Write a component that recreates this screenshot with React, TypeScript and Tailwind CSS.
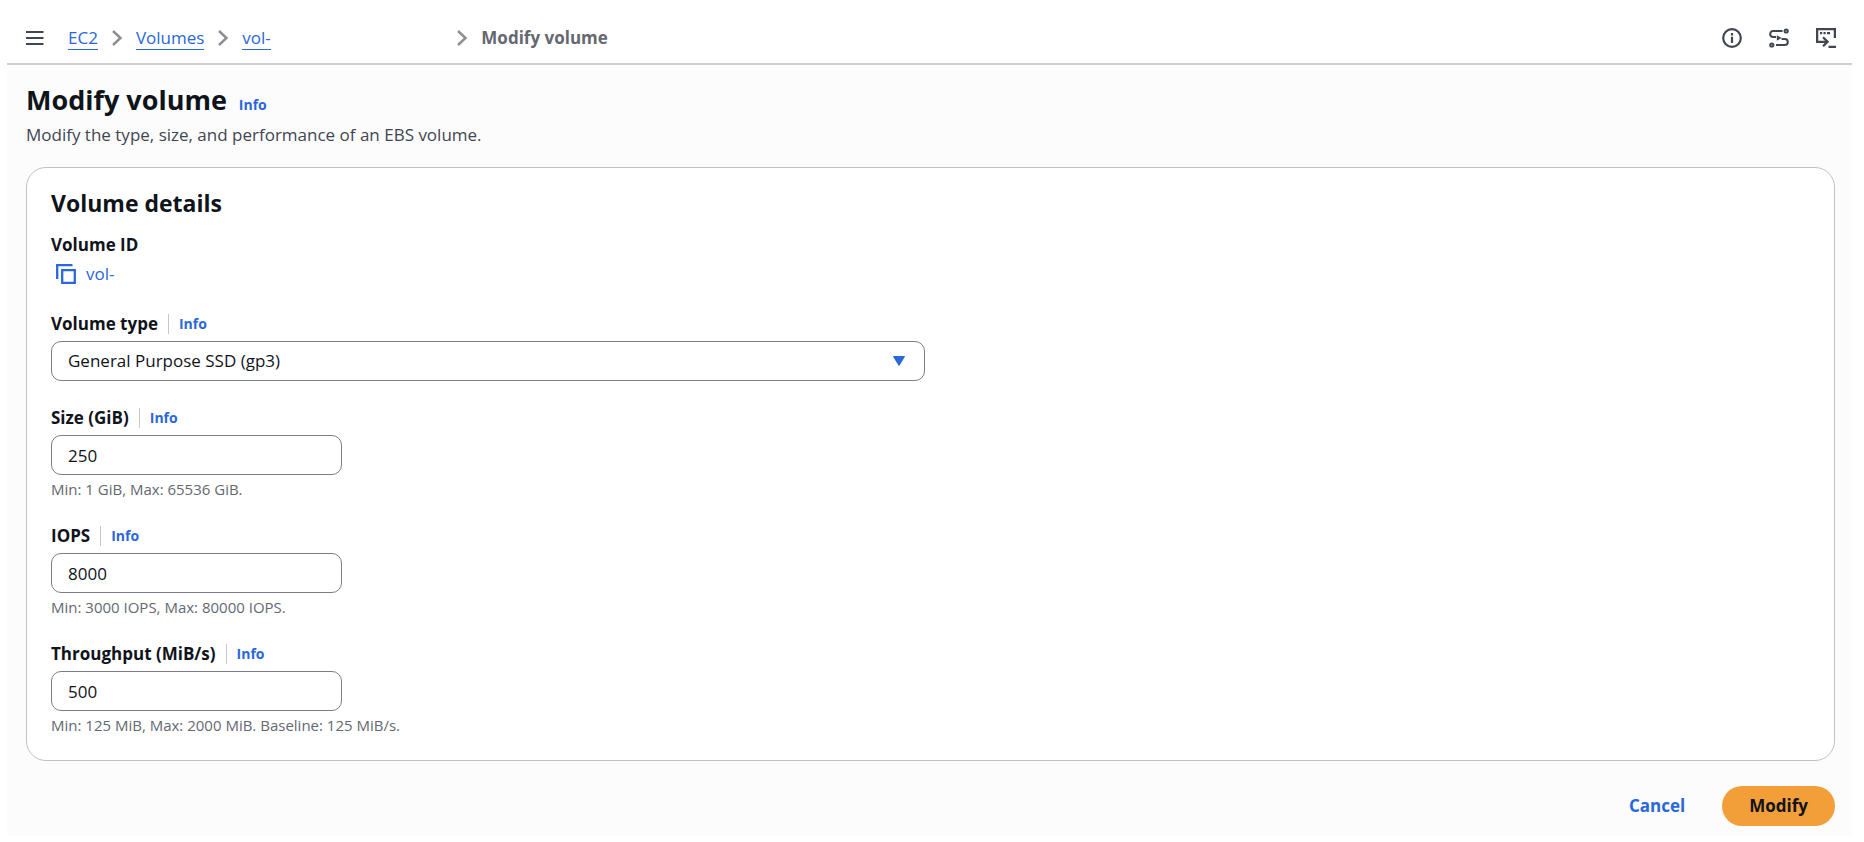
import { useState } from "react";
import type { ReactNode } from "react";

interface FieldProps {
  id: string;
  label: string;
  hint?: string;
  children: ReactNode;
}

const VOLUME_TYPES = [
  { value: "gp3", label: "General Purpose SSD (gp3)" },
  { value: "gp2", label: "General Purpose SSD (gp2)" },
  { value: "io1", label: "Provisioned IOPS SSD (io1)" },
  { value: "io2", label: "Provisioned IOPS SSD (io2)" },
];

const inputClass =
  "h-10 w-full rounded-[10px] border border-[#7d7d87] bg-white px-4 text-[17px] text-[#0f141a]";

export default function App() {
  const [volumeType, setVolumeType] = useState("gp3");
  const [size, setSize] = useState("250");
  const [iops, setIops] = useState("8000");
  const [throughput, setThroughput] = useState("500");

  return (
    <div className="min-h-screen bg-white pb-1 pl-[7px] pr-3 font-['Open_Sans','Noto_Sans',sans-serif] text-[17px] text-[#0f141a]">
      <TopBar />
      <main className="bg-[#fcfcfd] pb-2.5 pl-[19px] pr-[17px] pt-[15px]">
        <div className="flex items-baseline gap-3">
          <h1 className="text-[27px] font-bold leading-10">Modify volume</h1>
          <InfoLink />
        </div>
        <p className="mt-[3px] leading-6 text-[#424650]">
          Modify the type, size, and performance of an EBS volume.
        </p>

        <section className="mt-5 rounded-[20px] border border-[#c0c0c8] bg-white px-6 pb-[25px] pt-[19px]">
          <h2 className="text-[23px] font-bold leading-8">Volume details</h2>
          <dl className="mt-3.5">
            <dt className="font-bold leading-6">Volume ID</dt>
            <dd className="mt-[5px] flex items-center gap-2.5 pl-[5px] leading-6">
              <button type="button" aria-label="Copy volume ID" className="text-[#2a67d9]">
                <CopyIcon />
              </button>
              <a href="#volume" className="text-[#2a67d9]">
                vol-
              </a>
            </dd>
          </dl>

          <form className="mt-[26px] grid grid-cols-2 gap-3" onSubmit={(e) => e.preventDefault()}>
            <div className="flex flex-col gap-[25px]">
              <Field id="volume-type" label="Volume type">
                <div className="relative">
                  <select
                    id="volume-type"
                    value={volumeType}
                    onChange={(e) => setVolumeType(e.target.value)}
                    className={`${inputClass} appearance-none`}
                  >
                    {VOLUME_TYPES.map((t) => (
                      <option key={t.value} value={t.value}>
                        {t.label}
                      </option>
                    ))}
                  </select>
                  <CaretIcon />
                </div>
              </Field>
              <Field id="size" label="Size (GiB)" hint="Min: 1 GiB, Max: 65536 GiB.">
                <div className="w-1/3">
                  <input
                    id="size"
                    value={size}
                    onChange={(e) => setSize(e.target.value)}
                    className={inputClass}
                  />
                </div>
              </Field>
              <Field id="iops" label="IOPS" hint="Min: 3000 IOPS, Max: 80000 IOPS.">
                <div className="w-1/3">
                  <input
                    id="iops"
                    value={iops}
                    onChange={(e) => setIops(e.target.value)}
                    className={inputClass}
                  />
                </div>
              </Field>
              <Field
                id="throughput"
                label="Throughput (MiB/s)"
                hint="Min: 125 MiB, Max: 2000 MiB. Baseline: 125 MiB/s."
              >
                <div className="w-1/3">
                  <input
                    id="throughput"
                    value={throughput}
                    onChange={(e) => setThroughput(e.target.value)}
                    className={inputClass}
                  />
                </div>
              </Field>
            </div>
          </form>
        </section>

        <div className="mt-[25px] flex justify-end gap-2.5">
          <button type="button" className="h-10 px-[27px] font-bold text-[#2a67d9]">
            Cancel
          </button>
          <button type="button" className="h-10 rounded-full bg-[#f29f3a] px-[27px] font-bold">
            Modify
          </button>
        </div>
      </main>
    </div>
  );
}

function TopBar() {
  return (
    <header className="flex h-[65px] items-center justify-between border-b-2 border-[#d0d0d7] pl-[19px] pr-4 pt-3">
      <div className="flex items-center gap-6">
        <button type="button" aria-label="Open navigation" className="text-[#424650]">
          <svg width="18" height="16" viewBox="0 0 18 16" stroke="currentColor" strokeWidth="2">
            <path d="M0 2h17.500M0 8h17.500M0 14h17.500" />
          </svg>
        </button>
        <nav aria-label="Breadcrumbs">
          <ol className="flex items-center gap-[13px]">
            <Crumb href="#ec2">EC2</Crumb>
            <ChevronIcon />
            <Crumb href="#volumes">Volumes</Crumb>
            <ChevronIcon />
            <li className="w-[201px]">
              <CrumbLink href="#volume">vol-</CrumbLink>
            </li>
            <ChevronIcon />
            <li className="font-bold text-[#656871]" aria-current="page">
              Modify volume
            </li>
          </ol>
        </nav>
      </div>
      <div className="flex items-center gap-[27px] text-[#424650]">
        <button type="button" aria-label="Info">
          <svg width="20" height="20" viewBox="0 0 20 20" fill="none" stroke="currentColor" strokeWidth="2.2">
            <circle cx="10" cy="10" r="8.8" />
            <path d="M10 5v2.4M10 8.800V15" />
          </svg>
        </button>
        <button type="button" aria-label="Tutorials">
          <svg width="20" height="20" viewBox="0 0 20 20" fill="none" stroke="currentColor" strokeWidth="2">
            <path d="M13.500 3H4.200C2.300 3 1.200 4.300 1.200 6s1.200 3 3 3H7M12.500 11h3.300c1.900 0 3 1.300 3 3s-1.100 3-3 3H7" />
            <circle cx="17.200" cy="3" r="1.600" />
            <circle cx="2.800" cy="17" r="1.600" />
            <path d="M7.800 7.200l4.800 2.800-4.800 2.800z" fill="currentColor" stroke="none" />
          </svg>
        </button>
        <button type="button" aria-label="CloudShell">
          <svg width="20" height="20" viewBox="0 0 20 20" fill="none" stroke="currentColor" strokeWidth="2.3">
            <path d="M18.900 10V1.200H1.100v12.600H11M7 9.300l4.600 4.500L7 18.300M12.500 18.800H20" />
            <path d="M4 5.200h2.200M7.500 5.200h2.200M11 5.200h3" />
          </svg>
        </button>
      </div>
    </header>
  );
}

function Crumb({ href, children }: { href: string; children: ReactNode }) {
  return (
    <li>
      <CrumbLink href={href}>{children}</CrumbLink>
    </li>
  );
}

function CrumbLink({ href, children }: { href: string; children: ReactNode }) {
  return (
    <a href={href} className="border-b border-[#2a67d9] text-[#2a67d9]">
      {children}
    </a>
  );
}

function Field({ id, label, hint, children }: FieldProps) {
  return (
    <div>
      <div className="mb-[5px] flex h-6 items-center">
        <label htmlFor={id} className="font-bold">
          {label}
        </label>
        <span className="mx-2.5 h-5 w-px bg-[#c6c6cd]" />
        <InfoLink />
      </div>
      {children}
      {hint && <p className="mt-1 text-[15px] leading-5 text-[#656871]">{hint}</p>}
    </div>
  );
}

function InfoLink() {
  return (
    <a href="#info" className="text-sm font-bold text-[#2a67d9]">
      Info
    </a>
  );
}

function ChevronIcon() {
  return (
    <li aria-hidden="true">
      <svg width="12" height="16" viewBox="0 0 12 16" fill="none" stroke="#8c8c94" strokeWidth="2.4">
        <path d="M2 1l7.500 7L2 15" />
      </svg>
    </li>
  );
}

function CopyIcon() {
  return (
    <svg width="20" height="20" viewBox="0 0 20 20" fill="none" stroke="currentColor" strokeWidth="2.3">
      <path d="M1.200 15V1.200h15.300" />
      <path d="M6.200 6.200h12.600v12.600H6.200z" />
    </svg>
  );
}

function CaretIcon() {
  return (
    <svg
      className="pointer-events-none absolute right-5 top-[15px]"
      width="12"
      height="10"
      viewBox="0 0 12 10"
      fill="#2a67d9"
      stroke="#2a67d9"
      strokeWidth="1"
      strokeLinejoin="round"
    >
      <path d="M0.500 0.500h11L6 9.500z" />
    </svg>
  );
}
